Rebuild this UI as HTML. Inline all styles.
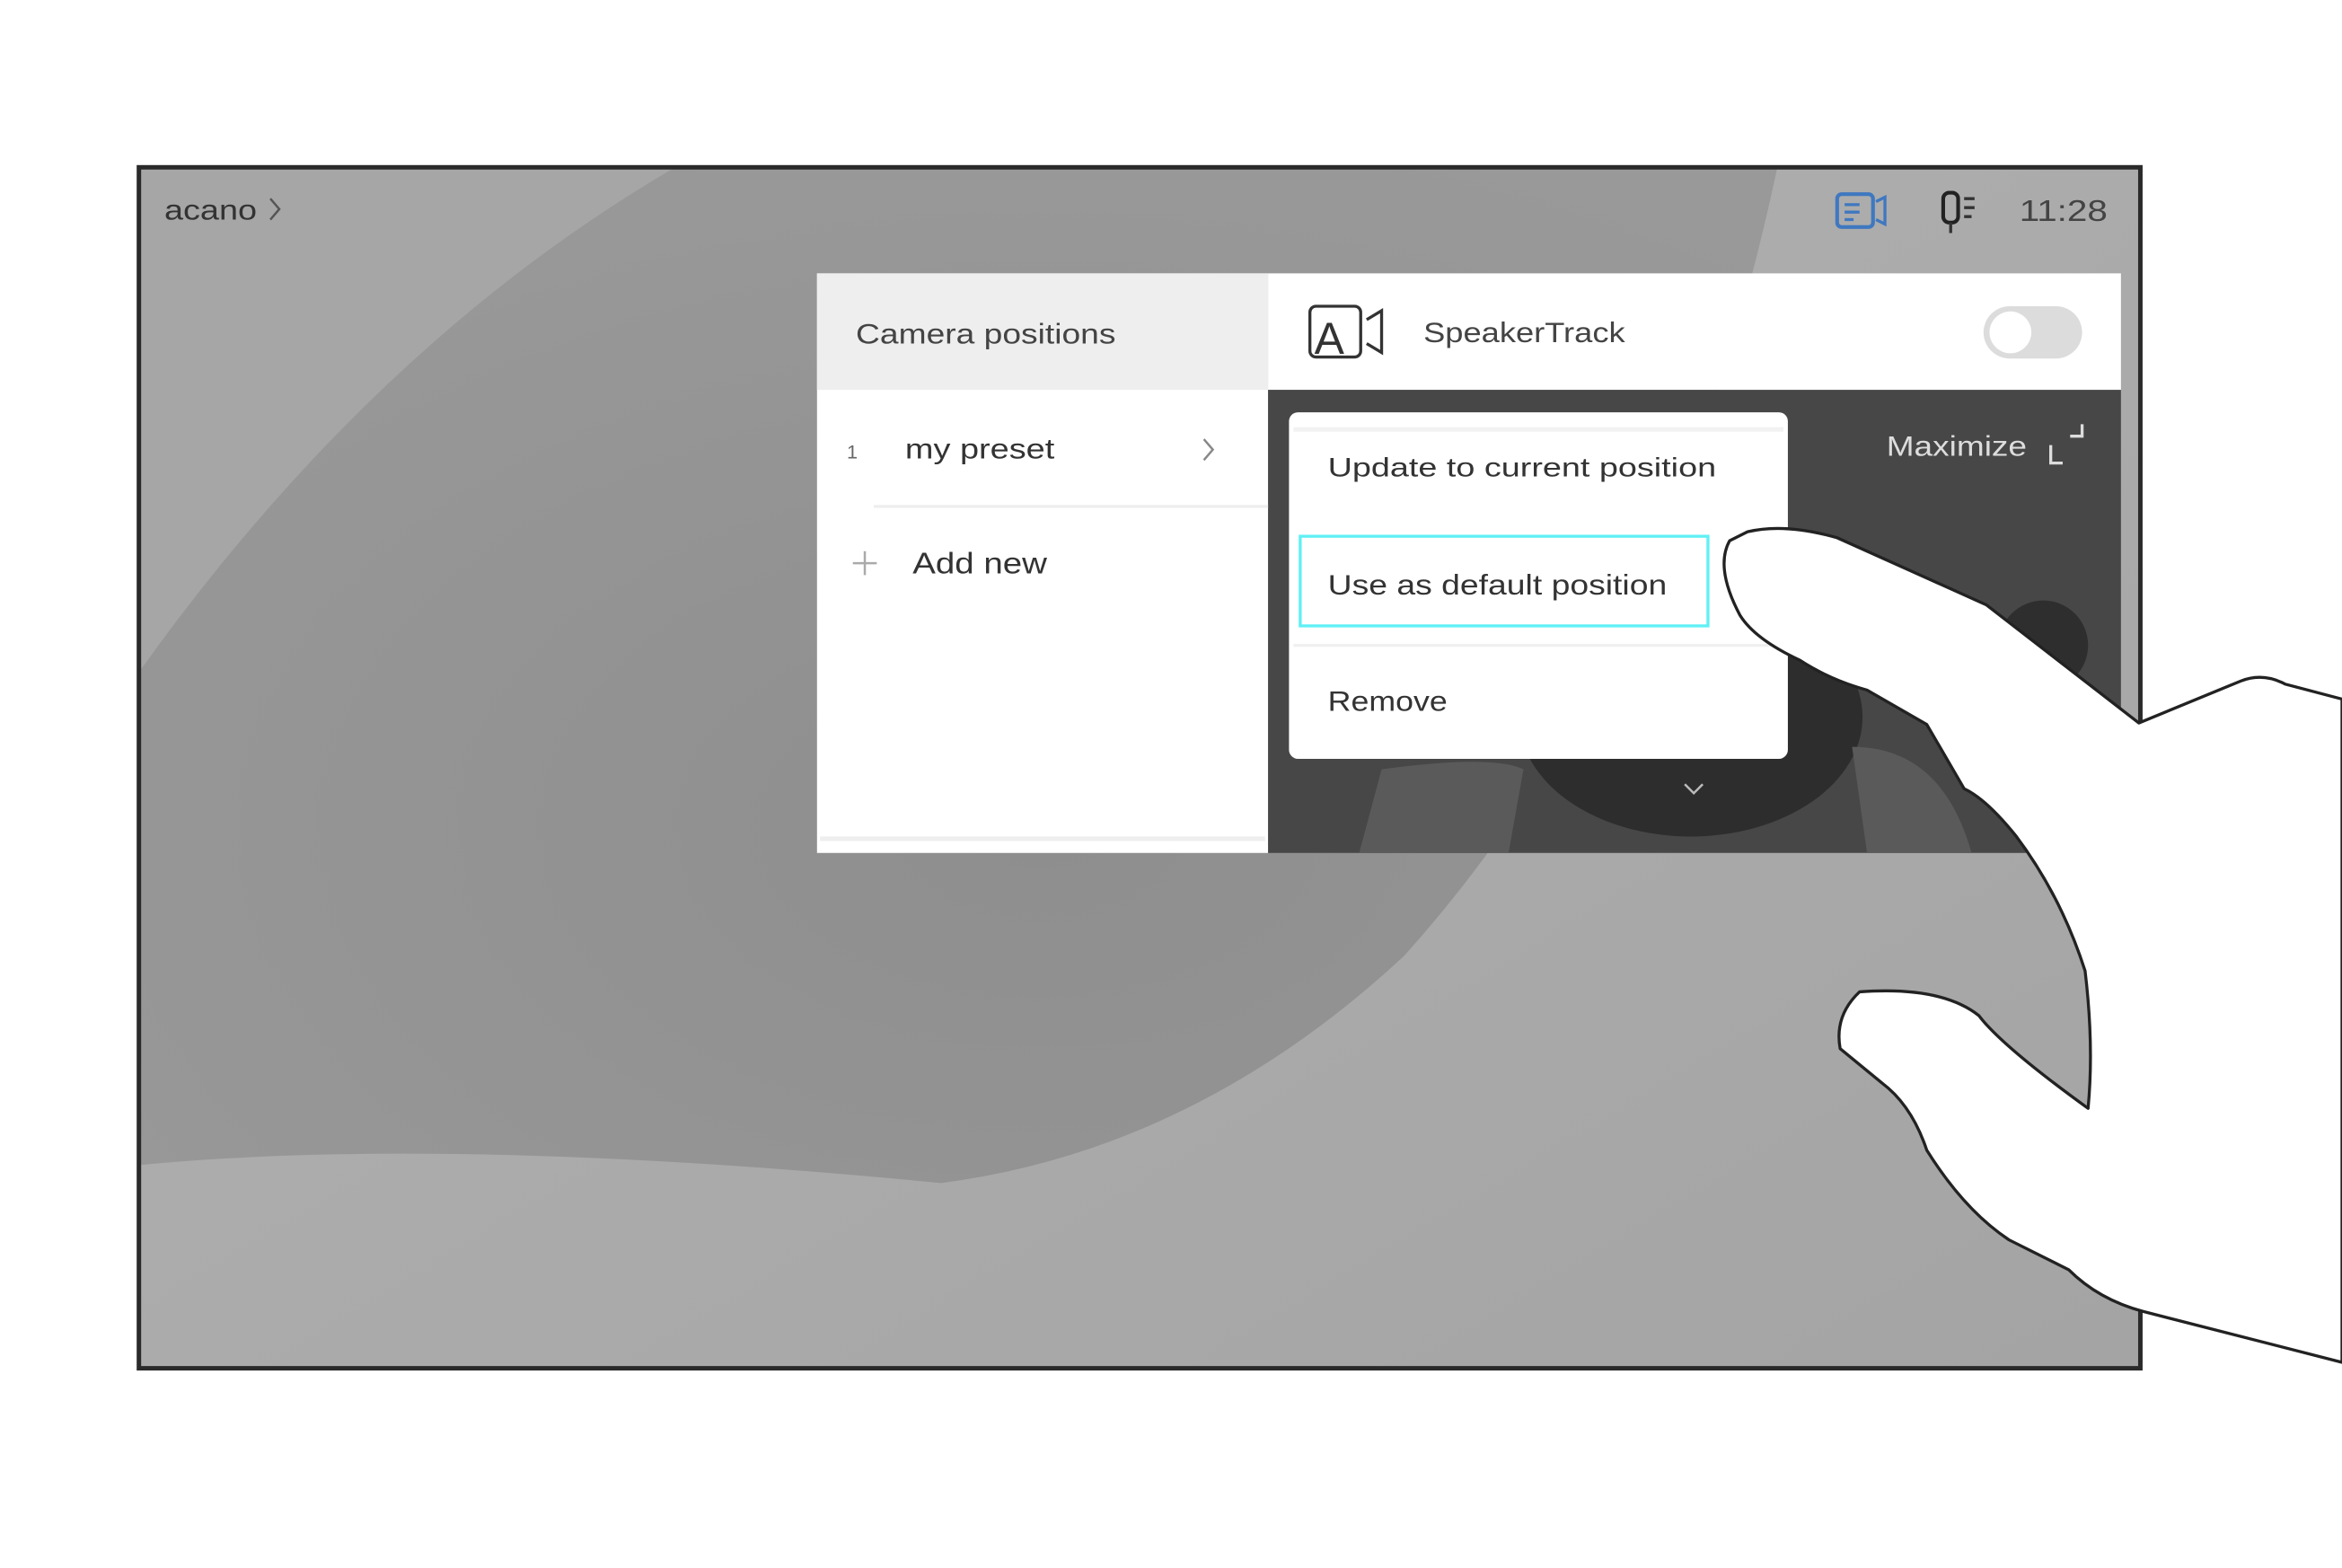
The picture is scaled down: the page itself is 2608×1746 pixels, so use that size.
<!DOCTYPE html>
<html><head><meta charset="utf-8"><style>
html,body{margin:0;padding:0;background:#fff;overflow:hidden}
svg{display:block}
text{font-family:"Liberation Sans",sans-serif}
</style></head><body>
<svg width="2608" height="1746" viewBox="0 0 1568 1049.7" preserveAspectRatio="none" xmlns="http://www.w3.org/2000/svg">
<defs>
<radialGradient id="dk" cx="0.45" cy="0.55" r="0.6">
<stop offset="0" stop-color="#8e8e8e"/><stop offset="1" stop-color="#999"/>
</radialGradient>
<linearGradient id="lt" x1="0" y1="0" x2="1" y2="1">
<stop offset="0" stop-color="#b2b2b2"/><stop offset="1" stop-color="#a4a4a4"/>
</linearGradient>
</defs>
<rect width="1568" height="1050" fill="#fff"/>
<rect x="93" y="112" width="1340" height="804" fill="url(#dk)"/>
<path d="M93,112 L452,112 Q250,230 93,450 Z" fill="#a6a6a6"/>
<path d="M1190,112 L1433,112 L1433,916 L93,916 L93,780 Q300,760 630,792 Q800,770 940,640 Q1120,440 1190,112 Z" fill="url(#lt)"/>
<rect x="93" y="112" width="1340" height="804" fill="none" stroke="#2a2a2a" stroke-width="3"/>
<text x="110" y="147" font-size="19" fill="#333" textLength="62" lengthAdjust="spacingAndGlyphs">acano</text>
<path d="M181,133 L187,140 L181,147" fill="none" stroke="#555" stroke-width="1.5"/>
<rect x="1230" y="130" width="24" height="22" rx="3" fill="none" stroke="#3f78c0" stroke-width="2.5"/>
<path d="M1235,137h10M1235,142h10M1235,147h6M1256,135l6,-3v18l-6,-3" fill="none" stroke="#3f78c0" stroke-width="2"/>
<rect x="1301" y="129" width="10" height="20" rx="4" fill="none" stroke="#222" stroke-width="2.5"/>
<path d="M1306,149v7M1315,133h7M1315,139h7M1315,145h5" stroke="#333" stroke-width="2"/>
<text x="1352" y="148" font-size="20" fill="#444" textLength="59" lengthAdjust="spacingAndGlyphs">11:28</text>
<rect x="547" y="183" width="302" height="388" fill="#fff"/>
<rect x="547" y="183" width="302" height="78" fill="#eeeeee"/>
<rect x="849" y="183" width="571" height="78" fill="#fff"/>
<rect x="849" y="261" width="571" height="310" fill="#474747"/>
<ellipse cx="1132" cy="480" rx="115" ry="80" fill="#2d2d2d"/>
<path d="M910,571 L925,515 Q1000,505 1020,515 L1010,571Z M1250,571 L1240,500 Q1300,500 1320,571Z" fill="#5a5a5a"/>
<circle cx="1368" cy="432" r="30" fill="#2e2e2e"/>
<text x="573" y="230" font-size="19" fill="#444" textLength="174" lengthAdjust="spacingAndGlyphs">Camera positions</text>
<text x="567" y="307" font-size="13" fill="#666">1</text>
<text x="606" y="307" font-size="19" fill="#333" textLength="100" lengthAdjust="spacingAndGlyphs">my preset</text>
<path d="M806,294 L812,301 L806,308" fill="none" stroke="#888" stroke-width="1.5"/>
<rect x="585" y="338" width="264" height="2" fill="#eee"/>
<path d="M579,369v16M571,377h16" stroke="#aaa" stroke-width="1.5"/>
<text x="611" y="384" font-size="20" fill="#333" textLength="90" lengthAdjust="spacingAndGlyphs">Add new</text>
<rect x="549" y="560" width="298" height="3" fill="#eee"/>
<rect x="877" y="205" width="34" height="34" rx="4" fill="none" stroke="#333" stroke-width="2"/>
<text x="880" y="237" font-size="30" fill="#333">A</text>
<path d="M915,214 L925,208 V236 L915,230" fill="none" stroke="#333" stroke-width="2"/>
<text x="953" y="229" font-size="19" fill="#444" textLength="135" lengthAdjust="spacingAndGlyphs">SpeakerTrack</text>
<rect x="1328" y="205" width="66" height="35" rx="17.5" fill="#dcdcdc"/>
<circle cx="1346" cy="222.5" r="14" fill="#fff"/>
<text x="1263" y="305" font-size="19" fill="#ddd" textLength="94" lengthAdjust="spacingAndGlyphs">Maximize</text>
<path d="M1373,298v12h8M1386,292h8v-8" fill="none" stroke="#ddd" stroke-width="2"/>
<path d="M1128,525 l6,6 l6,-6" fill="none" stroke="#bbb" stroke-width="1.5"/>
<rect x="863" y="276" width="334" height="232" rx="6" fill="#fff"/>
<rect x="866" y="286" width="328" height="3" fill="#f2f2f2"/>
<text x="889" y="319" font-size="18" fill="#333" textLength="260" lengthAdjust="spacingAndGlyphs">Update to current position</text>
<rect x="866" y="431" width="328" height="2" fill="#f0f0f0"/>
<rect x="870.5" y="359" width="273" height="60" fill="none" stroke="#5ff0f5" stroke-width="2"/>
<text x="889" y="398" font-size="19" fill="#333" textLength="227" lengthAdjust="spacingAndGlyphs">Use as default position</text>
<text x="889" y="476" font-size="19" fill="#333" textLength="80" lengthAdjust="spacingAndGlyphs">Remove</text>
<path d="M1170,356 Q1195,350 1230,360 L1330,405 L1432,484 L1500,456 Q1515,450 1530,458 L1568,468 L1568,912 L1435,878 Q1405,870 1385,850 L1345,830 Q1315,810 1290,770 Q1280,740 1260,725 L1232,702 Q1228,680 1245,664 Q1300,660 1325,680 Q1340,700 1398,742 Q1402,700 1396,650 Q1380,600 1350,560 Q1330,535 1315,528 L1290,485 L1250,462 Q1225,455 1205,442 Q1175,428 1165,412 Q1148,380 1158,362 Z" fill="#fff" stroke="#222" stroke-width="2" stroke-linejoin="round"/>
</svg>
</body></html>
